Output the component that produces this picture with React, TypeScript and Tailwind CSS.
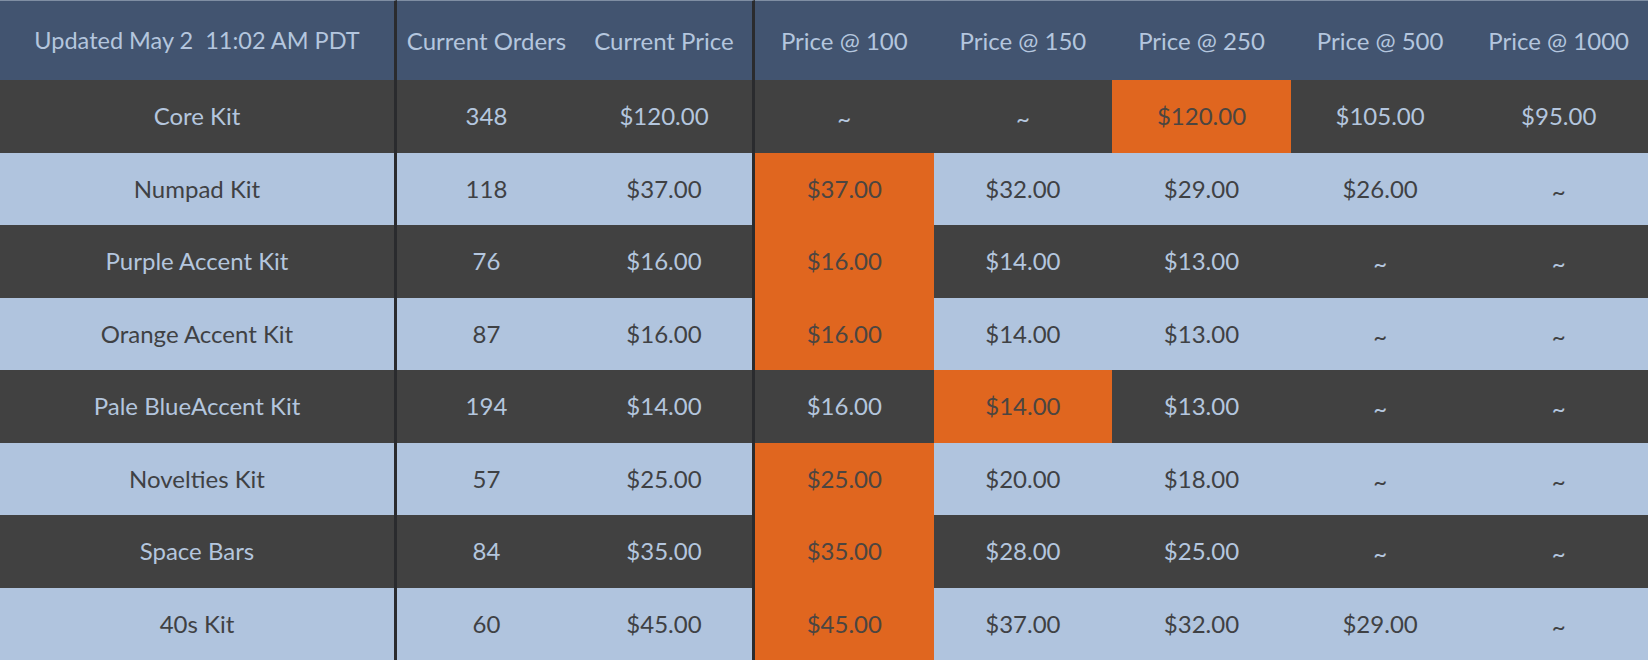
import React from "react";

type Row = { name: string; orders: string; price: string; tiers: string[]; hi: number };

const rows: Row[] = [
  { name: "Core Kit", orders: "348", price: "$120.00", tiers: ["~", "~", "$120.00", "$105.00", "$95.00"], hi: 2 },
  { name: "Numpad Kit", orders: "118", price: "$37.00", tiers: ["$37.00", "$32.00", "$29.00", "$26.00", "~"], hi: 0 },
  { name: "Purple Accent Kit", orders: "76", price: "$16.00", tiers: ["$16.00", "$14.00", "$13.00", "~", "~"], hi: 0 },
  { name: "Orange Accent Kit", orders: "87", price: "$16.00", tiers: ["$16.00", "$14.00", "$13.00", "~", "~"], hi: 0 },
  { name: "Pale BlueAccent Kit", orders: "194", price: "$14.00", tiers: ["$16.00", "$14.00", "$13.00", "~", "~"], hi: 1 },
  { name: "Novelties Kit", orders: "57", price: "$25.00", tiers: ["$25.00", "$20.00", "$18.00", "~", "~"], hi: 0 },
  { name: "Space Bars", orders: "84", price: "$35.00", tiers: ["$35.00", "$28.00", "$25.00", "~", "~"], hi: 0 },
  { name: "40s Kit", orders: "60", price: "$45.00", tiers: ["$45.00", "$37.00", "$32.00", "$29.00", "~"], hi: 0 },
];

const headers = ["Current Orders", "Current Price", "Price @ 100", "Price @ 150", "Price @ 250", "Price @ 500", "Price @ 1000"];

export default function App() {
  return (
    <div
      className="w-[1648px] h-[660px] overflow-hidden grid grid-cols-[397px_179px_179px_repeat(5,1fr)] grid-rows-[80px_repeat(8,1fr)] text-[24px] leading-none"
      style={{ fontFamily: "Lato, 'Noto Sans', sans-serif" }}
    >
      <div className="flex items-center justify-center bg-[#425470] text-[#b4c6de] border-r-[3px] border-r-[#2a2b2e] border-t border-t-[#7f8ea3] text-[23.5px]">
        Updated May 2&nbsp;&nbsp;11:02 AM PDT
      </div>
      {headers.map((h, i) => (
        <div
          key={h}
          className={
            "flex items-center justify-center bg-[#425470] text-[#b4c6de] border-t border-t-[#7f8ea3] " +
            (i === 1 ? "border-r-[3px] border-r-[#2a2b2e]" : "")
          }
        >
          {h}
        </div>
      ))}
      {rows.map((r, ri) => {
        const dark = ri % 2 === 0;
        const base = dark ? "bg-[#414141] text-[#b4c6de]" : "bg-[#b0c4de] text-[#3f4144]";
        return (
          <React.Fragment key={r.name}>
            <div className={"flex items-center justify-center border-r-[3px] border-r-[#2a2b2e] " + base}>{r.name}</div>
            <div className={"flex items-center justify-center " + base}>{r.orders}</div>
            <div className={"flex items-center justify-center border-r-[3px] border-r-[#2a2b2e] " + base}>{r.price}</div>
            {r.tiers.map((t, ti) => (
              <div
                key={ti}
                className={
                  "flex items-center justify-center " +
                  (ti === r.hi ? "bg-[#e0661f] text-[#4b4541]" : base) +
                  (t === "~" ? " pt-[4px]" : "")
                }
              >
                {t}
              </div>
            ))}
          </React.Fragment>
        );
      })}
    </div>
  );
}
